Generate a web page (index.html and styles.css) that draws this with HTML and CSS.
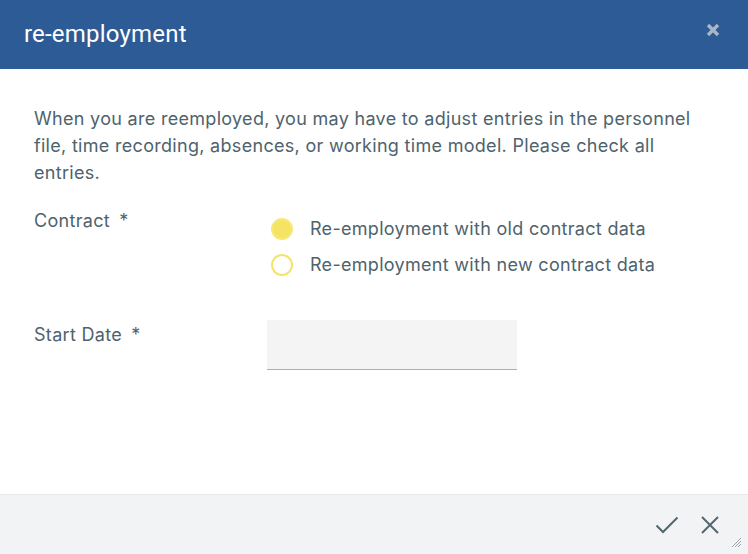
FILE: index.html
```html
<!DOCTYPE html>
<html>
<head>
<meta charset="utf-8">
<link rel="stylesheet" href="styles.css">
</head>
<body>
<div class="dialog">
  <header class="head">
    <h1 class="title">re-employment</h1>
    <span class="close">
      <svg width="14" height="14" viewBox="0 0 14 14"><path d="M2 2 L12 12 M12 2 L2 12" stroke="#a9b6c6" stroke-width="3.4" stroke-linecap="butt"/></svg>
    </span>
  </header>
  <main class="body">
    <p class="intro">When you are reemployed, you may have to adjust entries in the personnel file, time recording, absences, or working time model. Please check all entries.</p>
    <div class="row row-contract">
      <div class="label">Contract <span class="req">*</span></div>
      <div class="radios">
        <div class="radio"><span class="dot on"></span><span>Re-employment with old contract data</span></div>
        <div class="radio"><span class="dot"></span><span>Re-employment with new contract data</span></div>
      </div>
    </div>
    <div class="row row-date">
      <div class="label">Start Date <span class="req">*</span></div>
      <div class="input"></div>
    </div>
  </main>
  <footer class="foot">
    <svg class="ok" width="24" height="18" viewBox="0 0 24 18"><path d="M1.5 9.5 L8 16 L22.5 1.5" fill="none" stroke="#52676f" stroke-width="2"/></svg>
    <svg class="cancel" width="20" height="20" viewBox="0 0 20 20"><path d="M2 2 L18 18 M18 2 L2 18" fill="none" stroke="#52676f" stroke-width="2"/></svg>
    <svg class="grip" width="10" height="10" viewBox="0 0 10 10"><path d="M9 3 L3 9 M9 6 L6 9 M9 0 L0 9" stroke="#9aa4aa" stroke-width="1"/></svg>
  </footer>
</div>
</body>
</html>
```
FILE: styles.css
```css
html, body {
  margin: 0;
  padding: 0;
  background: #ffffff;
}
.dialog {
  width: 748px;
  height: 554px;
  display: flex;
  flex-direction: column;
  font-family: Inter, Roboto, "Liberation Sans", sans-serif;
  color: #4e636d;
  position: relative;
}
.head {
  height: 69px;
  background: #2d5b95;
  display: flex;
  align-items: center;
  justify-content: space-between;
  padding: 0 28px 0 24px;
  box-sizing: border-box;
}
.title {
  margin: 0;
  font-family: Roboto, "Liberation Sans", sans-serif;
  font-weight: 400;
  font-size: 24px;
  color: #ffffff;
  letter-spacing: 0.2px;
  padding-bottom: 1px;
}
.close {
  display: flex;
  margin-bottom: 10px;
}
.body {
  flex: 1;
  padding: 36px 34px 0 34px;
  box-sizing: border-box;
}
.intro {
  margin: 0;
  font-size: 18px;
  line-height: 27px;
  letter-spacing: 0.3px;
}
.row {
  display: flex;
}
.label {
  width: 233px;
  font-size: 18px;
  line-height: 24px;
  letter-spacing: 0.3px;
}
.req {
  margin-left: 4px;
}
.row-contract {
  margin-top: 23px;
}
.radios {
  display: flex;
  flex-direction: column;
  gap: 12px;
  padding-top: 8px;
}
.radio {
  display: flex;
  align-items: center;
  font-size: 18px;
  line-height: 24px;
  letter-spacing: 0.3px;
  gap: 17px;
}
.dot {
  width: 22px;
  height: 22px;
  border-radius: 50%;
  border: 2px solid #f3e46a;
  box-sizing: border-box;
  margin-left: 4px;
}
.dot.on {
  background: #f5e363;
  border-color: #f7e878;
}
.row-date {
  margin-top: 46px;
}
.input {
  width: 250px;
  height: 49px;
  background: #f4f4f4;
  border-bottom: 1px solid #aab1b6;
  margin-top: -3px;
}
.foot {
  height: 60px;
  background: #f2f3f5;
  border-top: 1px solid #e6e8ea;
  box-sizing: border-box;
  display: flex;
  align-items: center;
  justify-content: flex-end;
  padding: 0 28px 0 0;
  gap: 21px;
  position: relative;
}
.grip {
  position: absolute;
  right: 6px;
  bottom: 6px;
}
```
